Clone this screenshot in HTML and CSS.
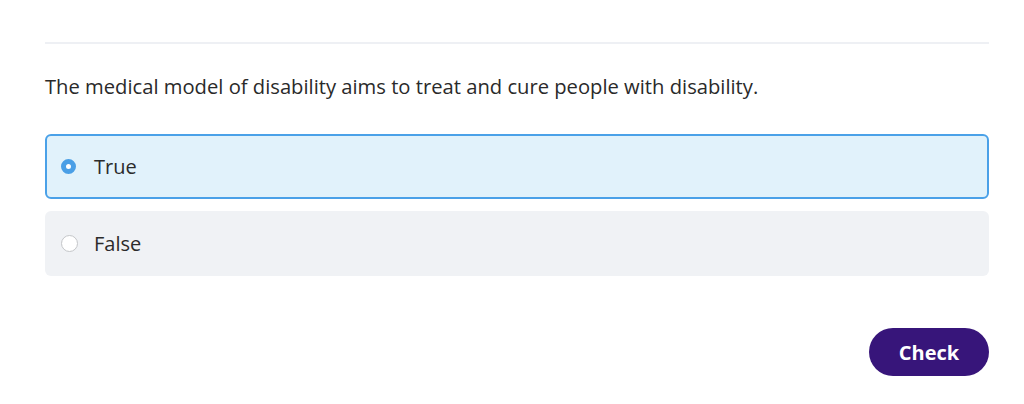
FILE: index.html
```html
<!DOCTYPE html>
<html>
<head>
<meta charset="utf-8">
<link rel="stylesheet" href="styles.css">
</head>
<body>
<div class="quiz">
  <hr class="divider">
  <p class="question">The medical model of disability aims to treat and cure people with disability.</p>
  <div class="options">
    <label class="option selected"><span class="radio checked"></span><span class="label">True</span></label>
    <label class="option"><span class="radio"></span><span class="label">False</span></label>
  </div>
  <div class="actions">
    <button class="check">Check</button>
  </div>
</div>
</body>
</html>
```
FILE: styles.css
```css
html, body {
  margin: 0;
  padding: 0;
  background: #fff;
}
body {
  font-family: "Open Sans", "Noto Sans", sans-serif;
  color: #2b2b2b;
}
.quiz {
  width: 944px;
  margin-left: 45px;
  padding-top: 42px;
}
.divider {
  border: none;
  height: 2px;
  background: #eef0f4;
  margin: 0;
}
.question {
  font-size: 20.2px;
  line-height: 28px;
  margin: 28px 0 0 0;
  color: #2a2a2a;
}
.options {
  display: flex;
  flex-direction: column;
  gap: 12px;
  margin-top: 34px;
}
.option {
  display: flex;
  align-items: center;
  height: 65px;
  box-sizing: border-box;
  border-radius: 6px;
  background: #f0f2f5;
  padding-left: 14px;
  border: 2px solid transparent;
}
.option.selected {
  background: #e1f2fb;
  border-color: #4aa1e8;
}
.radio {
  width: 17px;
  height: 17px;
  box-sizing: border-box;
  border-radius: 50%;
  background: #fff;
  border: 1px solid #c4c6c9;
  margin-right: 16px;
  flex: none;
}
.radio.checked {
  width: 15px;
  height: 15px;
  margin-right: 18px;
  border: 5px solid #4a9fe6;
  background: #fff;
}
.label {
  font-size: 20px;
  color: #2b2b2b;
}
.actions {
  display: flex;
  justify-content: flex-end;
  margin-top: 52px;
}
.check {
  width: 120px;
  height: 48px;
  border: none;
  border-radius: 24px;
  background: #37157a;
  color: #fff;
  font-family: "Open Sans", sans-serif;
  font-weight: 700;
  font-size: 20px;
}
```
